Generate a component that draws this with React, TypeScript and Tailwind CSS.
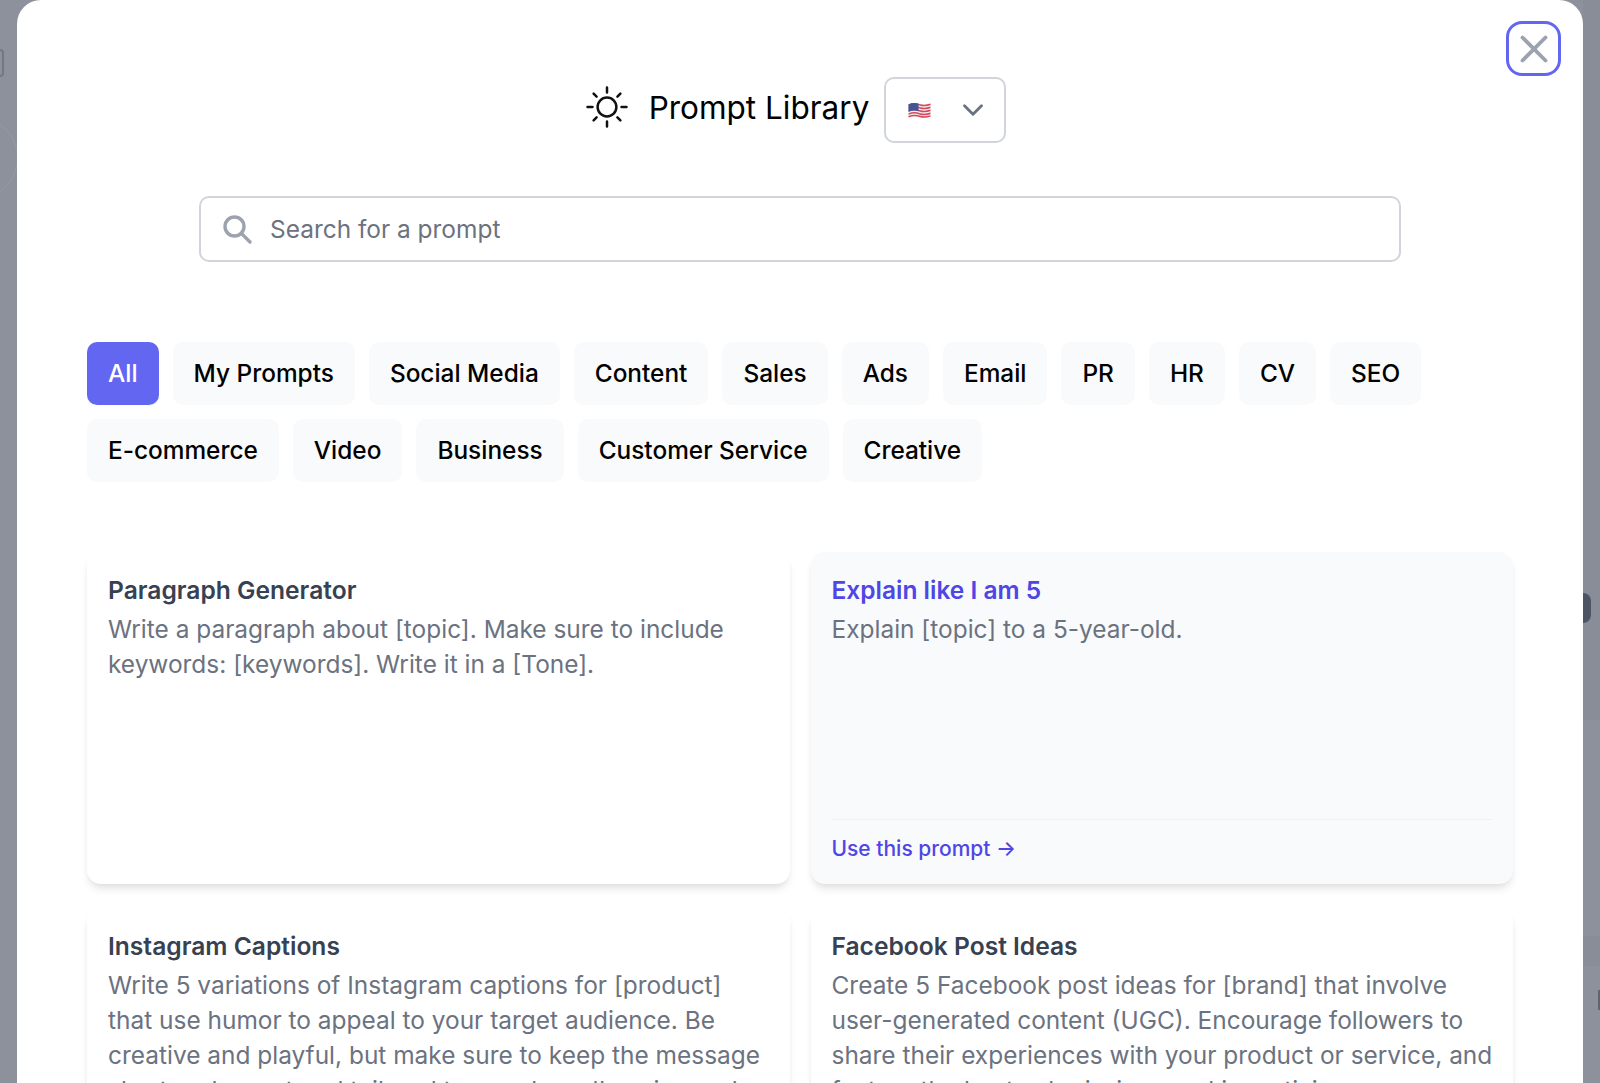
import { ChevronDown, X } from "lucide-react";

const row1 = ["All", "My Prompts", "Social Media", "Content", "Sales", "Ads", "Email", "PR", "HR", "CV", "SEO"];
const row2 = ["E-commerce", "Video", "Business", "Customer Service", "Creative"];

const cards = [
  {
    title: "Paragraph Generator",
    body: "Write a paragraph about [topic]. Make sure to include keywords: [keywords]. Write it in a [Tone].",
  },
  {
    title: "Explain like I am 5",
    body: "Explain [topic] to a 5-year-old.",
    active: true,
  },
  {
    title: "Instagram Captions",
    body: "Write 5 variations of Instagram captions for [product] that use humor to appeal to your target audience. Be creative and playful, but make sure to keep the message short and sweet and tailored to your brand's voice and tone.",
  },
  {
    title: "Facebook Post Ideas",
    body: "Create 5 Facebook post ideas for [brand] that involve user-generated content (UGC). Encourage followers to share their experiences with your product or service, and feature the best submissions and incentivize engagement.",
  },
];

const SunIcon = () => (
  <svg width="42" height="42" viewBox="0 0 42 42" fill="none" stroke="#111" strokeWidth="2.5" strokeLinecap="round">
    <circle cx="21" cy="21" r="9.4" />
    <path d="M21 1.5v5M21 35.5v5M1.5 21h5M35.5 21h5M7.6 7.6l3 3M31.4 31.4l3 3M34.4 7.6l-3 3M10.6 31.4l-3 3" />
  </svg>
);

const SearchIcon = () => (
  <svg width="29" height="29" viewBox="0 0 29 29" fill="none" stroke="#9ca3af" strokeWidth="3.4" strokeLinecap="round">
    <circle cx="11.5" cy="11.5" r="9.5" />
    <path d="M18.6 18.6 27 27" />
  </svg>
);

const Flag = () => (
  <svg width="23" height="17" viewBox="0 0 23 17" fill="none" strokeWidth="1.5">
    <path d="M0.5 2.4Q6 0 11.5 2Q17 3.8 22.5 1.6V14.6Q17 16.8 11.5 15Q6 13.2 0.5 15.4Z" fill="#f0eef2" />
    <path d="M0.5 3.1Q6 0.7 11.5 2.7Q17 4.5 22.5 2.3" stroke="#d9475a" />
    <path d="M0.5 6.1Q6 3.7 11.5 5.7Q17 7.5 22.5 5.3" stroke="#d9475a" />
    <path d="M0.5 9.1Q6 6.7 11.5 8.7Q17 10.5 22.5 8.3" stroke="#d9475a" />
    <path d="M0.5 12.1Q6 9.7 11.5 11.7Q17 13.5 22.5 11.3" stroke="#d9475a" />
    <path d="M0.5 14.7Q6 12.5 11.5 14.3Q17 16.1 22.5 13.9" stroke="#d9475a" />
    <path d="M0.5 2.4Q5.5 0.2 10.5 1.7V9.2Q5.5 7.6 0.5 9.7Z" fill="#3f5796" />
  </svg>
);

const App = () => {
  return (
    <div className="relative h-[1083px] w-[1600px] overflow-hidden bg-[#8c919c] font-['Inter',sans-serif]">
      {/* bits of the page behind the overlay */}
      <div className="absolute left-0 top-[49px] h-[28px] w-[4px] rounded-r border-2 border-l-0 border-[#737886]" />
      <div className="absolute left-[-60px] top-[118px] h-[80px] w-[78px] rounded-full border border-[#969aa4]" />
      <div className="absolute right-0 top-0 h-[720px] w-[17px] bg-[#888d98]" />
      <div className="absolute right-0 top-[936px] h-[30px] w-[17px] bg-[#888d98]" />
      <div className="absolute right-[9px] top-[593px] h-[30px] w-[8px] rounded-r-full bg-[#4d5463]" />
      <div className="absolute right-0 top-[990px] h-[20px] w-[2px] bg-[#5f6470]" />

      <div className="relative ml-[17px] h-[1083px] w-[1566px] overflow-hidden rounded-t-[24px] bg-white">
        <button className="absolute right-[22px] top-[21px] flex h-[55px] w-[55px] items-center justify-center rounded-[16px] border-[3px] border-[#6366f1] text-[#9ca3af]">
          <X size={46} strokeWidth={2} />
        </button>

        <div className="flex items-center justify-center pr-[8px] pt-[77px]">
          <div className="mb-[6px]">
            <SunIcon />
          </div>
          <h1 className="mb-[4px] ml-[21px] text-[31.5px] leading-[44px] text-black">Prompt Library</h1>
          <div className="ml-[15px] flex h-[66px] w-[122px] items-center justify-between rounded-[10px] border-2 border-[#d1d5db] pl-[22px] pr-[14px]">
            <Flag />
            <ChevronDown size={34} strokeWidth={2} className="text-[#6b7280]" />
          </div>
        </div>

        <div className="mx-[182px] mt-[53px] flex h-[66px] items-center rounded-[10px] border-2 border-[#d1d5db] pl-[22px]">
          <SearchIcon />
          <span className="ml-[18px] text-[24.45px] text-[#6b7280]">Search for a prompt</span>
        </div>

        <div className="mx-[70px] mt-[80px] flex flex-col gap-[14px]">
          {[row1, row2].map((row, i) => (
            <div key={i} className="flex gap-[14px]">
              {row.map((tag) => (
                <div
                  key={tag}
                  className={
                    tag === "All"
                      ? "flex h-[63px] items-center rounded-[10px] bg-[#6366f1] px-[21px] text-[24.4px] font-medium text-white"
                      : "flex h-[63px] items-center rounded-[10px] bg-[#f9fafb] px-[21px] text-[24.4px] font-medium text-black"
                  }
                >
                  {tag}
                </div>
              ))}
            </div>
          ))}
        </div>

        <div className="mx-[70px] mt-[70px] grid grid-cols-2 gap-x-[21px] gap-y-[24px]">
          {cards.map((card) => (
            <div
              key={card.title}
              className={
                card.active
                  ? "flex h-[332px] flex-col rounded-[14px] bg-[#f9fafc] pl-[21px] pr-[19px] pt-[21px] shadow-[0_7px_10px_-2px_rgba(0,0,0,0.09),0_3px_7px_-3px_rgba(0,0,0,0.09)]"
                  : "flex h-[332px] flex-col rounded-[14px] bg-white pl-[21px] pr-[19px] pt-[21px] shadow-[0_7px_10px_-2px_rgba(0,0,0,0.09),0_3px_7px_-3px_rgba(0,0,0,0.09)]"
              }
            >
              <h3
                className={
                  card.active
                    ? "text-[24.5px] font-semibold leading-[35px] text-[#4f46e5]"
                    : "text-[24.6px] font-semibold leading-[35px] text-[#374151]"
                }
              >
                {card.title}
              </h3>
              <p className="mt-[4px] text-[24.45px] leading-[35px] text-[#6b7280]">{card.body}</p>
              {card.active && (
                <div className="mr-[2px] mt-auto h-[65px] border-t border-[#f0f1f4] pt-[14px] text-[21px] font-medium leading-[30px] text-[#4f46e5]">
                  Use this prompt →
                </div>
              )}
            </div>
          ))}
        </div>
      </div>
    </div>
  );
};

export default App;
